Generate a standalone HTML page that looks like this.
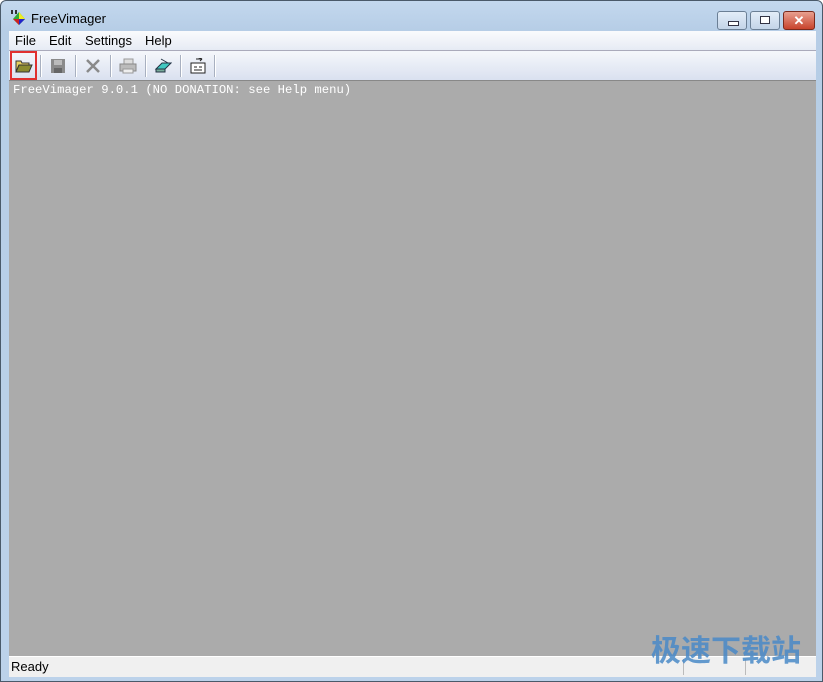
<!DOCTYPE html>
<html><head><style>
body{margin:0;width:823px;height:682px;overflow:hidden;font-family:"Liberation Sans","Noto Sans CJK SC",sans-serif;}
.win{position:absolute;left:0;top:0;width:821px;height:680px;border:1px solid #4a5a6a;border-radius:6px 6px 0 0;background:linear-gradient(#c3d8ee,#b6cde6 30px,#bcd2ea);}
.title{position:absolute;left:30px;top:10px;font-size:13px;color:#000;}
.btn{position:absolute;top:10px;height:17px;border:1px solid #6b7f95;border-radius:3px;background:linear-gradient(#e3edf8,#c3d4e8);}
.client{position:absolute;left:8px;top:30px;width:807px;height:645px;background:#f0f0f0;}
.menu{position:absolute;left:0;top:0;width:807px;height:19px;background:linear-gradient(#fafbfd,#e6ebf4);font-size:13px;}
.menu span{position:absolute;top:2px;}
.tb{position:absolute;left:0;top:19px;width:807px;height:30px;background:linear-gradient(#f5f7fb,#d9e0ef);border-top:1px solid #aab;}
.sep{position:absolute;top:4px;width:1px;height:22px;background:#a8b0c0;border-right:1px solid #fff;}
.gray{position:absolute;left:0;top:49px;width:807px;height:575px;background:#ababab;border-top:1px solid #888;}
.status{position:absolute;left:0;top:625px;width:807px;height:20px;background:#f0f0f0;border-top:1px solid #fff;font-size:13px;}
</style></head><body>
<div class="win">
<svg style="position:absolute;left:9px;top:8px" width="18" height="18"><polygon points="3,10 9,3 15,10 9,16" fill="#3a3"/><polygon points="9,3 15,10 9,10" fill="#ee2"/><polygon points="3,10 9,10 9,16" fill="#c22"/><polygon points="9,10 15,10 9,16" fill="#22c"/><rect x="1" y="1" width="2" height="4" fill="#333"/><rect x="5" y="1" width="2" height="4" fill="#333"/></svg>
<div class="title">FreeVimager</div>
<div class="btn" style="left:716px;width:28px"><div style="position:absolute;left:10px;top:9px;width:9px;height:3px;border:1px solid #334;background:#fff"></div></div>
<div class="btn" style="left:749px;width:28px"><div style="position:absolute;left:9px;top:4px;width:8px;height:6px;border:1px solid #334;background:#fff"></div></div>
<div class="btn" style="left:782px;width:30px;background:linear-gradient(#e8a090,#c8432c);border-color:#7a2a1c;color:#fff;font-weight:bold;font-size:13px;text-align:center;line-height:17px">✕</div>
<div class="client">
<div class="menu"><span style="left:6px">File</span><span style="left:40px">Edit</span><span style="left:76px">Settings</span><span style="left:136px">Help</span></div>
<div class="tb">
<div style="position:absolute;left:1px;top:0;width:27px;height:29px;border:2px solid #e03030;box-sizing:border-box"></div>
<svg style="position:absolute;left:6px;top:7px" width="18" height="16"><path d="M1 3h5l1 2h7v2H4L1 14z" fill="#e8d060" stroke="#333"/><path d="M1 14l3-7h13l-3 7z" fill="#8a8a30" stroke="#333"/></svg>
<div class="sep" style="left:31px"></div>
<svg style="position:absolute;left:41px;top:7px" width="16" height="16"><rect x="1" y="1" width="14" height="14" fill="#8a8a8a"/><rect x="4" y="2" width="8" height="5" fill="#bbb"/><rect x="4" y="10" width="8" height="5" fill="#666"/></svg>
<div class="sep" style="left:66px"></div>
<svg style="position:absolute;left:76px;top:7px" width="16" height="16"><path d="M2 2l12 12M14 2L2 14" stroke="#8a8a8a" stroke-width="2.5"/></svg>
<div class="sep" style="left:101px"></div>
<svg style="position:absolute;left:110px;top:7px" width="18" height="16"><rect x="5" y="1" width="9" height="5" fill="#ddd" stroke="#999"/><rect x="1" y="6" width="16" height="7" fill="#bbb" stroke="#888"/><rect x="4" y="11" width="10" height="4" fill="#eee" stroke="#999"/></svg>
<div class="sep" style="left:136px"></div>
<svg style="position:absolute;left:145px;top:6px" width="18" height="18"><path d="M2 12l6-6h9l-6 6z" fill="#40c8c0" stroke="#234"/><path d="M2 12h9v3H2z" fill="#7a9" stroke="#234"/><path d="M7 2l7 4" stroke="#234"/></svg>
<div class="sep" style="left:171px"></div>
<svg style="position:absolute;left:181px;top:7px" width="16" height="16"><rect x="1" y="5" width="14" height="10" fill="#fff" stroke="#222"/><path d="M4 9h3M9 9h3M4 12h8M6 1h6l-2-1M12 1l-2 2" stroke="#222"/></svg>
<div class="sep" style="left:205px"></div>
</div>
<div class="gray"><div style="position:absolute;left:4px;top:2px;color:#fff;font-family:'Liberation Mono','DejaVu Sans Mono',monospace;font-size:12.25px;white-space:nowrap">FreeVimager 9.0.1 (NO DONATION: see Help menu)</div></div>
<div class="status"><span style="position:absolute;left:2px;top:2px">Ready</span>
<div style="position:absolute;left:674px;top:2px;width:1px;height:16px;background:#bbb"></div>
<div style="position:absolute;left:736px;top:2px;width:1px;height:16px;background:#bbb"></div></div>
<div style="position:absolute;left:642px;top:603px;font-size:30px;line-height:36px;font-weight:bold;color:#4a8ac8;opacity:.85">极速下载站</div>
</div>
</div>
</body></html>
